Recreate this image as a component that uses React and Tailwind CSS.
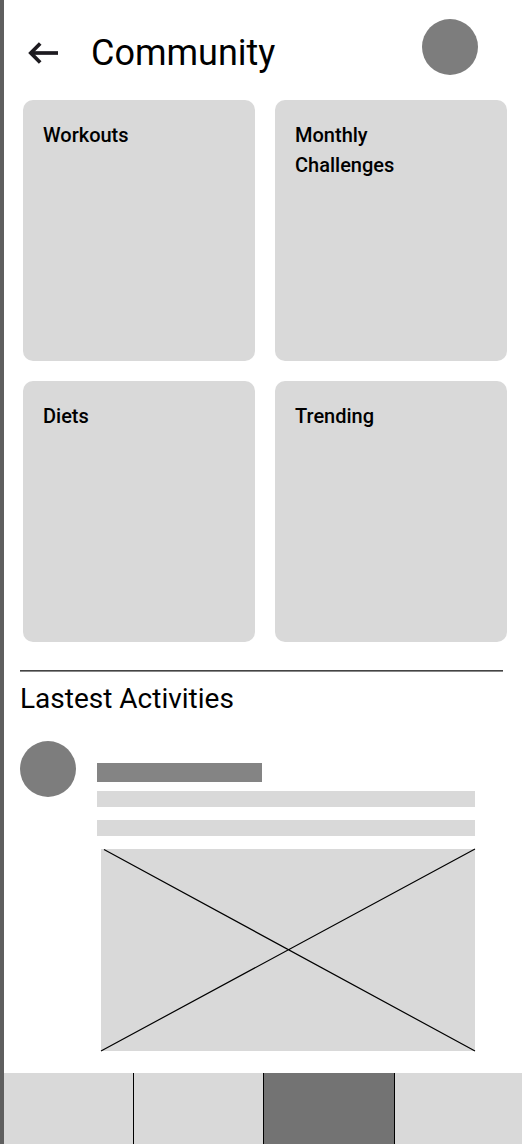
const topics = ["Workouts", "Monthly Challenges", "Diets", "Trending"];

const tabs = [
  { name: "Home", style: "bg-[#d9d9d9] border-r border-black" },
  { name: "Plans", style: "bg-[#d9d9d9]" },
  { name: "Community", style: "bg-[#737373] border-x border-black", current: true },
  { name: "Profile", style: "bg-[#d9d9d9]" },
];

function Header() {
  return (
    <header className="flex items-start pt-[19px] pb-[25px] pl-6 pr-11">
      <div className="flex grow items-center pt-3.5">
        <button type="button" aria-label="Back" className="shrink-0">
          <svg width="30" height="22" viewBox="0 0 30 22" fill="none" stroke="#1d1b20" strokeWidth="3.7">
            <path d="M3 11H30" />
            <path d="M12.2 1.5L2.8 11L12.2 20.5" />
          </svg>
        </button>
        <h1 className="ml-[33px] text-4xl">Community</h1>
      </div>
      <button type="button" aria-label="Profile" className="size-14 shrink-0 rounded-full bg-[#7d7d7d]" />
    </header>
  );
}

function Topics() {
  return (
    <section className="grid grid-cols-2 gap-5 pl-[19px] pr-[15px]">
      {topics.map((topic) => (
        <button
          key={topic}
          type="button"
          className="flex h-[261px] items-start rounded-[10px] bg-[#d9d9d9] p-5 text-left text-xl leading-[30px] font-medium"
        >
          <span className="max-w-32">{topic}</span>
        </button>
      ))}
    </section>
  );
}

function Activity() {
  return (
    <article className="flex items-start gap-[21px] pr-7">
      <div className="size-14 shrink-0 rounded-full bg-[#7d7d7d]" />
      <div className="grow pt-[22px]">
        <div className="h-[19px] w-[165px] bg-[#848484]" />
        <div className="mt-[9px] h-4 bg-[#d9d9d9]" />
        <div className="mt-[13px] h-4 bg-[#d9d9d9]" />
        <div className="mt-[13px] ml-1 h-[202px] bg-[#d9d9d9]">
          <svg
            className="block h-full w-full overflow-visible"
            viewBox="0 0 374 202"
            preserveAspectRatio="none"
            stroke="#000"
            strokeWidth="1.2"
          >
            <path d="M3 0.5L374 202M0 202L374 0" />
          </svg>
        </div>
      </div>
    </article>
  );
}

export default function App() {
  return (
    <div className="flex min-h-screen flex-col border-l-4 border-[#5f5f5f] bg-white font-[Roboto,sans-serif] text-black">
      <Header />
      <main className="grow">
        <Topics />
        <section className="mt-7 mb-[22px] ml-4 mr-[19px] border-t border-[#444444]">
          <div className="border-t border-[#888888]" />
          <h2 className="mt-[9px] mb-6 text-[28px] leading-9">Lastest Activities</h2>
          <Activity />
        </section>
      </main>
      <nav className="grid h-[71px] grid-cols-[130fr_129fr_132fr_127fr]">
        {tabs.map((tab) => (
          <button
            key={tab.name}
            type="button"
            aria-label={tab.name}
            aria-current={tab.current ? "page" : undefined}
            className={tab.style}
          />
        ))}
      </nav>
    </div>
  );
}
